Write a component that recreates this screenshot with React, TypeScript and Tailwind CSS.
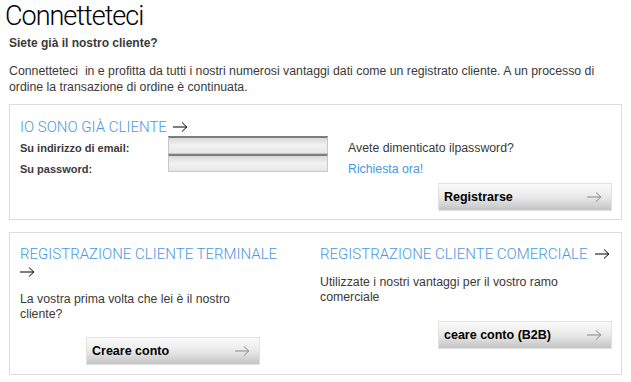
import React from 'react';

function Arrow({ className = '' }: { className?: string }) {
  return (
    <svg width="15" height="10" viewBox="0 0 15 10" className={className} fill="none" stroke="currentColor" strokeWidth="1">
      <path d="M0 5h14M9 0.5l4.8 4.5L9 9.5" />
    </svg>
  );
}

function GrayButton({ label, className = '' }: { label: string; className?: string }) {
  return (
    <div
      className={`flex h-[26px] w-[172px] items-center justify-between bg-gradient-to-b from-[#fbfbfb] via-[#e9e9e9] to-[#c4c4c4] pl-[5px] pr-[9px] shadow-[0_0_0_1px_#e2e2e2] ${className}`}
    >
      <span className="text-[12.5px] font-bold text-black">{label}</span>
      <Arrow className="text-[#888]" />
    </div>
  );
}

function Field() {
  return <div className="h-[18px] w-[160px] border border-[#c9c9c9] border-t-[#7d7d7d] border-t-2 bg-gradient-to-b from-[#d9d9d9] via-[#f2f2f2] to-[#e6e6e6]" />;
}

const heading = "font-['Roboto','Liberation_Sans',sans-serif] text-[15px] font-light text-[#4a98e0]";

export default function App() {
  return (
    <div className="h-[382px] w-[631px] bg-white font-['Liberation_Sans',Arial,sans-serif] text-[#3a3a3a]">
      <h1 className="pl-[5px] pt-[1px] font-['Roboto','Liberation_Sans',sans-serif] text-[27px] font-light leading-[31px] tracking-[-1px] text-black">
        Connetteteci
      </h1>
      <div className="px-[9px]">
        <p className="mt-[4px] text-[12px] font-bold leading-[14px]">Siete già il nostro cliente?</p>
        <p className="mt-[13px] text-[12.3px] leading-[16px]">
          Connetteteci&nbsp; in e profitta da tutti i nostri numerosi vantaggi dati come un registrato cliente. A un processo di
          <br />
          ordine la transazione di ordine è continuata.
        </p>

        <div className="mt-[9px] border border-[#dcdcdc] px-[10px] pb-[9px] pt-[13px]">
          <div className={`flex items-center gap-[6px] leading-[18px] ${heading}`}>
            IO SONO GIÀ CLIENTE <Arrow className="text-black" />
          </div>
          <div className="flex">
            <div className="w-[148px] pt-[2px] text-[11px] font-bold leading-[21px]">
              <div>Su indirizzo di email:</div>
              <div>Su password:</div>
            </div>
            <div className="flex flex-col">
              <Field />
              <Field />
            </div>
            <div className="pl-[20px] pt-[2px] text-[12.3px] leading-[21px]">
              <div>Avete dimenticato ilpassword?</div>
              <div className="text-[#4a98e0]">Richiesta ora!</div>
            </div>
          </div>
          <div className="mt-[4px] flex justify-end">
            <GrayButton label="Registrarse" />
          </div>
        </div>

        <div className="mt-[12px] flex h-[143px] gap-[20px] border border-[#dcdcdc] px-[10px] pt-[11px]">
          <div className="w-[280px]">
            <div className={`leading-[20px] ${heading}`}>REGISTRAZIONE CLIENTE TERMINALE</div>
            <Arrow className="mt-[3px] text-black" />
            <p className="mt-[15px] text-[12.3px] leading-[15px]">
              La vostra prima volta che lei è il nostro
              <br />
              cliente?
            </p>
            <GrayButton label="Creare conto" className="ml-[67px] mt-[16px]" />
          </div>
          <div className="flex-1">
            <div className={`flex items-center gap-[8px] leading-[20px] ${heading}`}>
              REGISTRAZIONE CLIENTE COMERCIALE <Arrow className="text-black" />
            </div>
            <p className="mt-[11px] text-[12.3px] leading-[15px]">
              Utilizzate i nostri vantaggi per il vostro ramo
              <br />
              comerciale
            </p>
            <div className="mt-[17px] flex justify-end">
              <GrayButton label="ceare conto (B2B)" />
            </div>
          </div>
        </div>
      </div>
    </div>
  );
}
